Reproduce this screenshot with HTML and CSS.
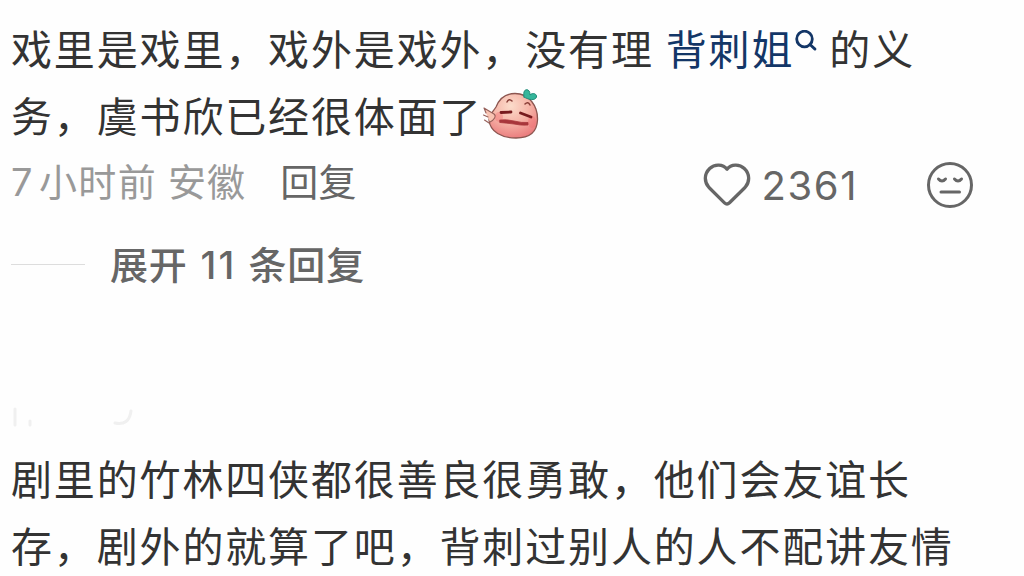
FILE: index.html
```html
<!DOCTYPE html>
<html lang="zh-CN">

<head>
    <meta charset="UTF-8">
    <meta name="viewport" content="width=device-width, initial-scale=1.0">
    <title>评论</title>

    <link rel="stylesheet" href="styles.css">
</head>

<body>
    <div class="comments">
        <div class="comment">
            <p class="text">戏里是戏里，戏外是戏外，没有理<a class="keyword">背刺姐<svg class="search" viewBox="0 0 22 22"><circle cx="9.5" cy="9" r="7.8" /><path d="M15 14.500l5 4.600" /></svg></a>的义<br>务，虞书欣已经很体面了<svg class="emoji" viewBox="0 0 58 54">
                    <defs>
                        <radialGradient id="skin" cx="0.45" cy="0.28" r="0.75">
                            <stop offset="0" stop-color="#fbdccb" />
                            <stop offset="0.5" stop-color="#f6b5a8" />
                            <stop offset="1" stop-color="#ea7a7c" />
                        </radialGradient>
                    </defs>
                    <path class="face" d="M14 19C18 9 25 5.500 33 5.500C47 5.500 56 18 55.500 32C55 44 47 50 34 50C20 50 8 44 7 32C7 27 11 24 14 19Z" />
                    <path class="hand" d="M7 35L2.500 32M6 29L1.500 27M4 25L2 20L12 26C15 28 12 32 8 34" />
                    <ellipse class="cheek" cx="17" cy="29" rx="4" ry="5" />
                    <ellipse class="cheek" cx="50" cy="34" rx="4" ry="6" />
                    <path class="brow" d="M25 14Q27 10 30 13M43 16Q46 13 48 17" />
                    <path class="eye" d="M19 24.500L29 24M38.500 25L49 29" />
                    <path class="mouth" d="M18 32Q24 31 32 33Q40 35 46 34.500L46 37Q38 37.500 32 36Q24 35 18 34.500Z" />
                    <path class="leaf" d="M42 9C41 3 43 1 46 2C48 3 48 6 48 7C51 4 55 6 54.500 9C53 13 47 12 42 9Z" />
                </svg></p>
            <div class="meta">
                <span class="time"><span class="hour">7</span>小时前</span>
                <span class="place">安徽</span>
                <span class="reply">回复</span>
                <div class="actions">
                    <svg class="heart" viewBox="0 0 48 44"><path d="M24 6.200C20 1 11.500 .8 6.700 5.500C1 11 1 19 6 24.500L21.500 39.800Q24 42.200 26.500 39.800L42 24.500C47 19 47 11 41.300 5.500C36.500 .8 28 1 24 6.200Z" /></svg>
                    <span class="count">2361</span>
                    <svg class="dislike" viewBox="0 0 48 48"><circle cx="24" cy="24" r="21.500" /><path d="M12.500 18Q16 22 19.500 18M28.500 18Q32 22 35.500 18M15 31H33.500" /></svg>
                </div>
            </div>
            <div class="expand">
                <span class="line"></span>
                <span>展开<span class="num">11</span>条回复</span>
            </div>
        </div>

        <!-- faded user name -->
        <svg class="faded" viewBox="0 0 130 20"><path d="M4 2V18M19 14V18M104 16Q118 19 120 4" /></svg>

        <div class="comment">
            <p class="text">剧里的竹林四侠都很善良很勇敢，他们会友谊长<br>存，剧外的就算了吧，背刺过别人的人不配讲友情</p>
        </div>
    </div>
</body>

</html>
```

FILE: styles.css
```css
* {
    margin: 0;
    padding: 0;
    box-sizing: border-box;
}

body {
    height: 576px;
    overflow: hidden;
    background: #fefefe;
    font-family: "Noto Sans CJK SC", sans-serif;
}

svg {
    fill: none;
    stroke-linecap: round;
    stroke-linejoin: round;
}

.comments {
    display: flex;
    flex-direction: column;
    padding: 14px 0 0 11px;
}

.text {
    font-size: 41px;
    line-height: 67px;
    letter-spacing: 1.85px;
    white-space: nowrap;
    color: #333;
}

.keyword {
    margin: 0 12px;
    color: #133667;
}

.search {
    width: 22px;
    height: 22px;
    margin-left: 1px;
    vertical-align: 13px;
    stroke: #133667;
    stroke-width: 2.8;
}

.emoji {
    width: 58px;
    height: 54px;
    margin: -10px 0;
    vertical-align: 0;
}

.face {
    fill: url(#skin);
    stroke: #8c5650;
    stroke-width: 1.3;
}

.hand {
    fill: #f8c3b2;
    stroke: #96605a;
    stroke-width: 1.1;
}

.cheek {
    fill: #f0686e;
    opacity: 0.35;
}

.brow {
    stroke: #8a3f38;
    stroke-width: 1.5;
}

.eye {
    stroke: #771b1e;
    stroke-width: 2.8;
}

.mouth {
    fill: #a8363b;
    stroke: #a8363b;
    stroke-width: 0.8;
}

.leaf {
    fill: #35b69b;
    stroke: #218b78;
    stroke-width: 1;
}

.meta {
    display: flex;
    align-items: center;
    height: 62px;
    font-size: 38px;
    color: #999;
}

.time {
    letter-spacing: 1.4px;
}

.hour {
    margin-right: 5px;
    font-family: Inter, sans-serif;
}

.place {
    margin-left: 11px;
    letter-spacing: 1px;
}

.reply {
    margin-left: 34px;
    letter-spacing: 0.4px;
    color: #666;
}

.actions {
    display: flex;
    align-items: center;
    margin: 11px 50px 0 auto;
    color: #666;
}

.heart {
    width: 48px;
    height: 44px;
    stroke: #666;
    stroke-width: 3.3;
}

.count {
    margin-left: 10px;
    padding-top: 2px;
    font-family: Inter, sans-serif;
    font-size: 40px;
    line-height: 48px;
    letter-spacing: 1.6px;
}

.dislike {
    width: 48px;
    height: 48px;
    margin-left: 68px;
    stroke: #666;
    stroke-width: 3;
}

.expand {
    display: flex;
    align-items: center;
    height: 60px;
    margin-top: 22px;
    font-size: 38px;
    font-weight: 500;
    letter-spacing: 0.8px;
    color: #666;
}

.line {
    width: 74px;
    height: 1px;
    margin: 4px 25px 0 0;
    background: #ddd;
}

.num {
    margin: 0 12px 0 13px;
    font-family: Inter, sans-serif;
    letter-spacing: 2.2px;
}

.faded {
    width: 130px;
    height: 20px;
    margin: 115px 0 17px;
    stroke: #f0f0f0;
    stroke-width: 3;
}
```
